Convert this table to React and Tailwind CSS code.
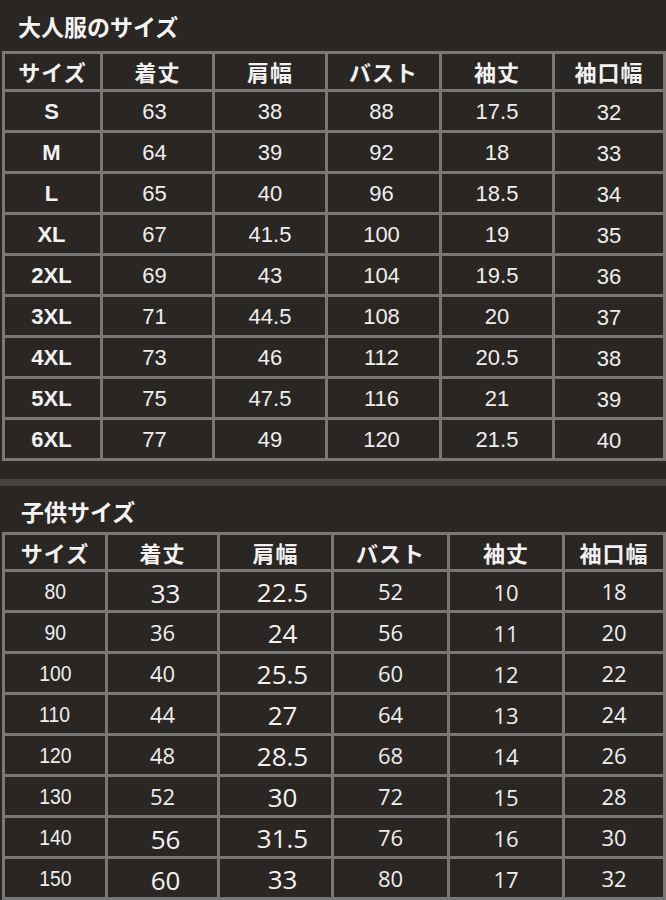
import React from "react";

const headers = ["サイズ", "着丈", "肩幅", "バスト", "袖丈", "袖口幅"];

const adult = [
  ["S", "63", "38", "88", "17.5", "32"],
  ["M", "64", "39", "92", "18", "33"],
  ["L", "65", "40", "96", "18.5", "34"],
  ["XL", "67", "41.5", "100", "19", "35"],
  ["2XL", "69", "43", "104", "19.5", "36"],
  ["3XL", "71", "44.5", "108", "20", "37"],
  ["4XL", "73", "46", "112", "20.5", "38"],
  ["5XL", "75", "47.5", "116", "21", "39"],
  ["6XL", "77", "49", "120", "21.5", "40"],
];

const kids = [
  ["80", "33", "22.5", "52", "10", "18", true],
  ["90", "36", "24", "56", "11", "20", false],
  ["100", "40", "25.5", "60", "12", "22", false],
  ["110", "44", "27", "64", "13", "24", false],
  ["120", "48", "28.5", "68", "14", "26", false],
  ["130", "52", "30", "72", "15", "28", false],
  ["140", "56", "31.5", "76", "16", "30", true],
  ["150", "60", "33", "80", "17", "32", true],
];

const cell = "bg-[#2a2623] flex items-center justify-center text-[#eeeeee]";
const num = "font-['Liberation_Sans',Arial,sans-serif] text-[22px]";
const knum = "font-['Open_Sans','Liberation_Sans',sans-serif]";

function HeaderCell({ children }) {
  return (
    <div className="bg-[#2a2623] flex items-center justify-center text-[22px] font-bold text-[#f1f1f1] tracking-[1px] font-['Noto_Sans_CJK_JP','Noto_Sans',sans-serif]">
      {children}
    </div>
  );
}

function Title({ children, className }) {
  return (
    <div
      className={
        "flex items-center text-[23px] font-bold text-[#f3f3f3] font-['Noto_Sans_CJK_JP','Noto_Sans',sans-serif] " +
        className
      }
    >
      {children}
    </div>
  );
}

export default function App() {
  return (
    <div className="w-[666px] h-[900px] bg-[#2a2623] overflow-hidden flex flex-col">
      <Title className="h-[51px] pl-[18px] pt-[2px]">大人服のサイズ</Title>
      <div className="ml-[2px] w-[664px] grid grid-cols-[95px_109px_110px_111px_110px_108px] grid-rows-[35px_repeat(9,38px)] gap-[3px] p-[3px] bg-[#7a7876]">
        {headers.map((h) => (
          <HeaderCell key={h}>{h}</HeaderCell>
        ))}
        {adult.map((r) => (
          <React.Fragment key={r[0]}>
            <div className={`${cell} ${num} pr-[2px] font-bold text-[#f1f1f1]`}>{r[0]}</div>
            <div className={`${cell} ${num} pr-[6px]`}>{r[1]}</div>
            <div className={`${cell} ${num}`}>{r[2]}</div>
            <div className={`${cell} ${num} pr-[4px]`}>{r[3]}</div>
            <div className={`${cell} ${num}`}>{r[4]}</div>
            <div className={`${cell} ${num} pt-[2px]`}>{r[5]}</div>
          </React.Fragment>
        ))}
      </div>
      <div className="h-[18px]" />
      <div className="h-[7px] bg-[#46433f]" />
      <Title className="h-[46px] pl-[21px] pt-[4px]">子供サイズ</Title>
      <div className="ml-[2px] w-[664px] grid grid-cols-[100px_109px_111px_113px_112px_98px] grid-rows-[34px_repeat(8,38px)] gap-[3px] p-[3px] bg-[#7a7876]">
        {headers.map((h) => (
          <HeaderCell key={"k" + h}>{h}</HeaderCell>
        ))}
        {kids.map((r) => (
          <React.Fragment key={"k" + r[0]}>
            <div className={`${cell} ${num}`}>
              <span className="inline-block scale-x-[0.88]">{r[0]}</span>
            </div>
            <div
              className={
                r[6]
                  ? `${cell} ${knum} pl-[6px] pt-[4px] text-[26px] text-[#f3f3f3]`
                  : `${cell} ${knum} text-[22px]`
              }
            >
              {r[1]}
            </div>
            <div className={`${cell} ${knum} pl-[14px] pt-[2px] text-[26px] text-[#f3f3f3]`}>{r[2]}</div>
            <div className={`${cell} ${knum} text-[22px]`}>{r[3]}</div>
            <div className={`${cell} ${knum} pt-[2px] text-[22px]`}>{r[4]}</div>
            <div className={`${cell} ${knum} text-[22px]`}>{r[5]}</div>
          </React.Fragment>
        ))}
      </div>
    </div>
  );
}
